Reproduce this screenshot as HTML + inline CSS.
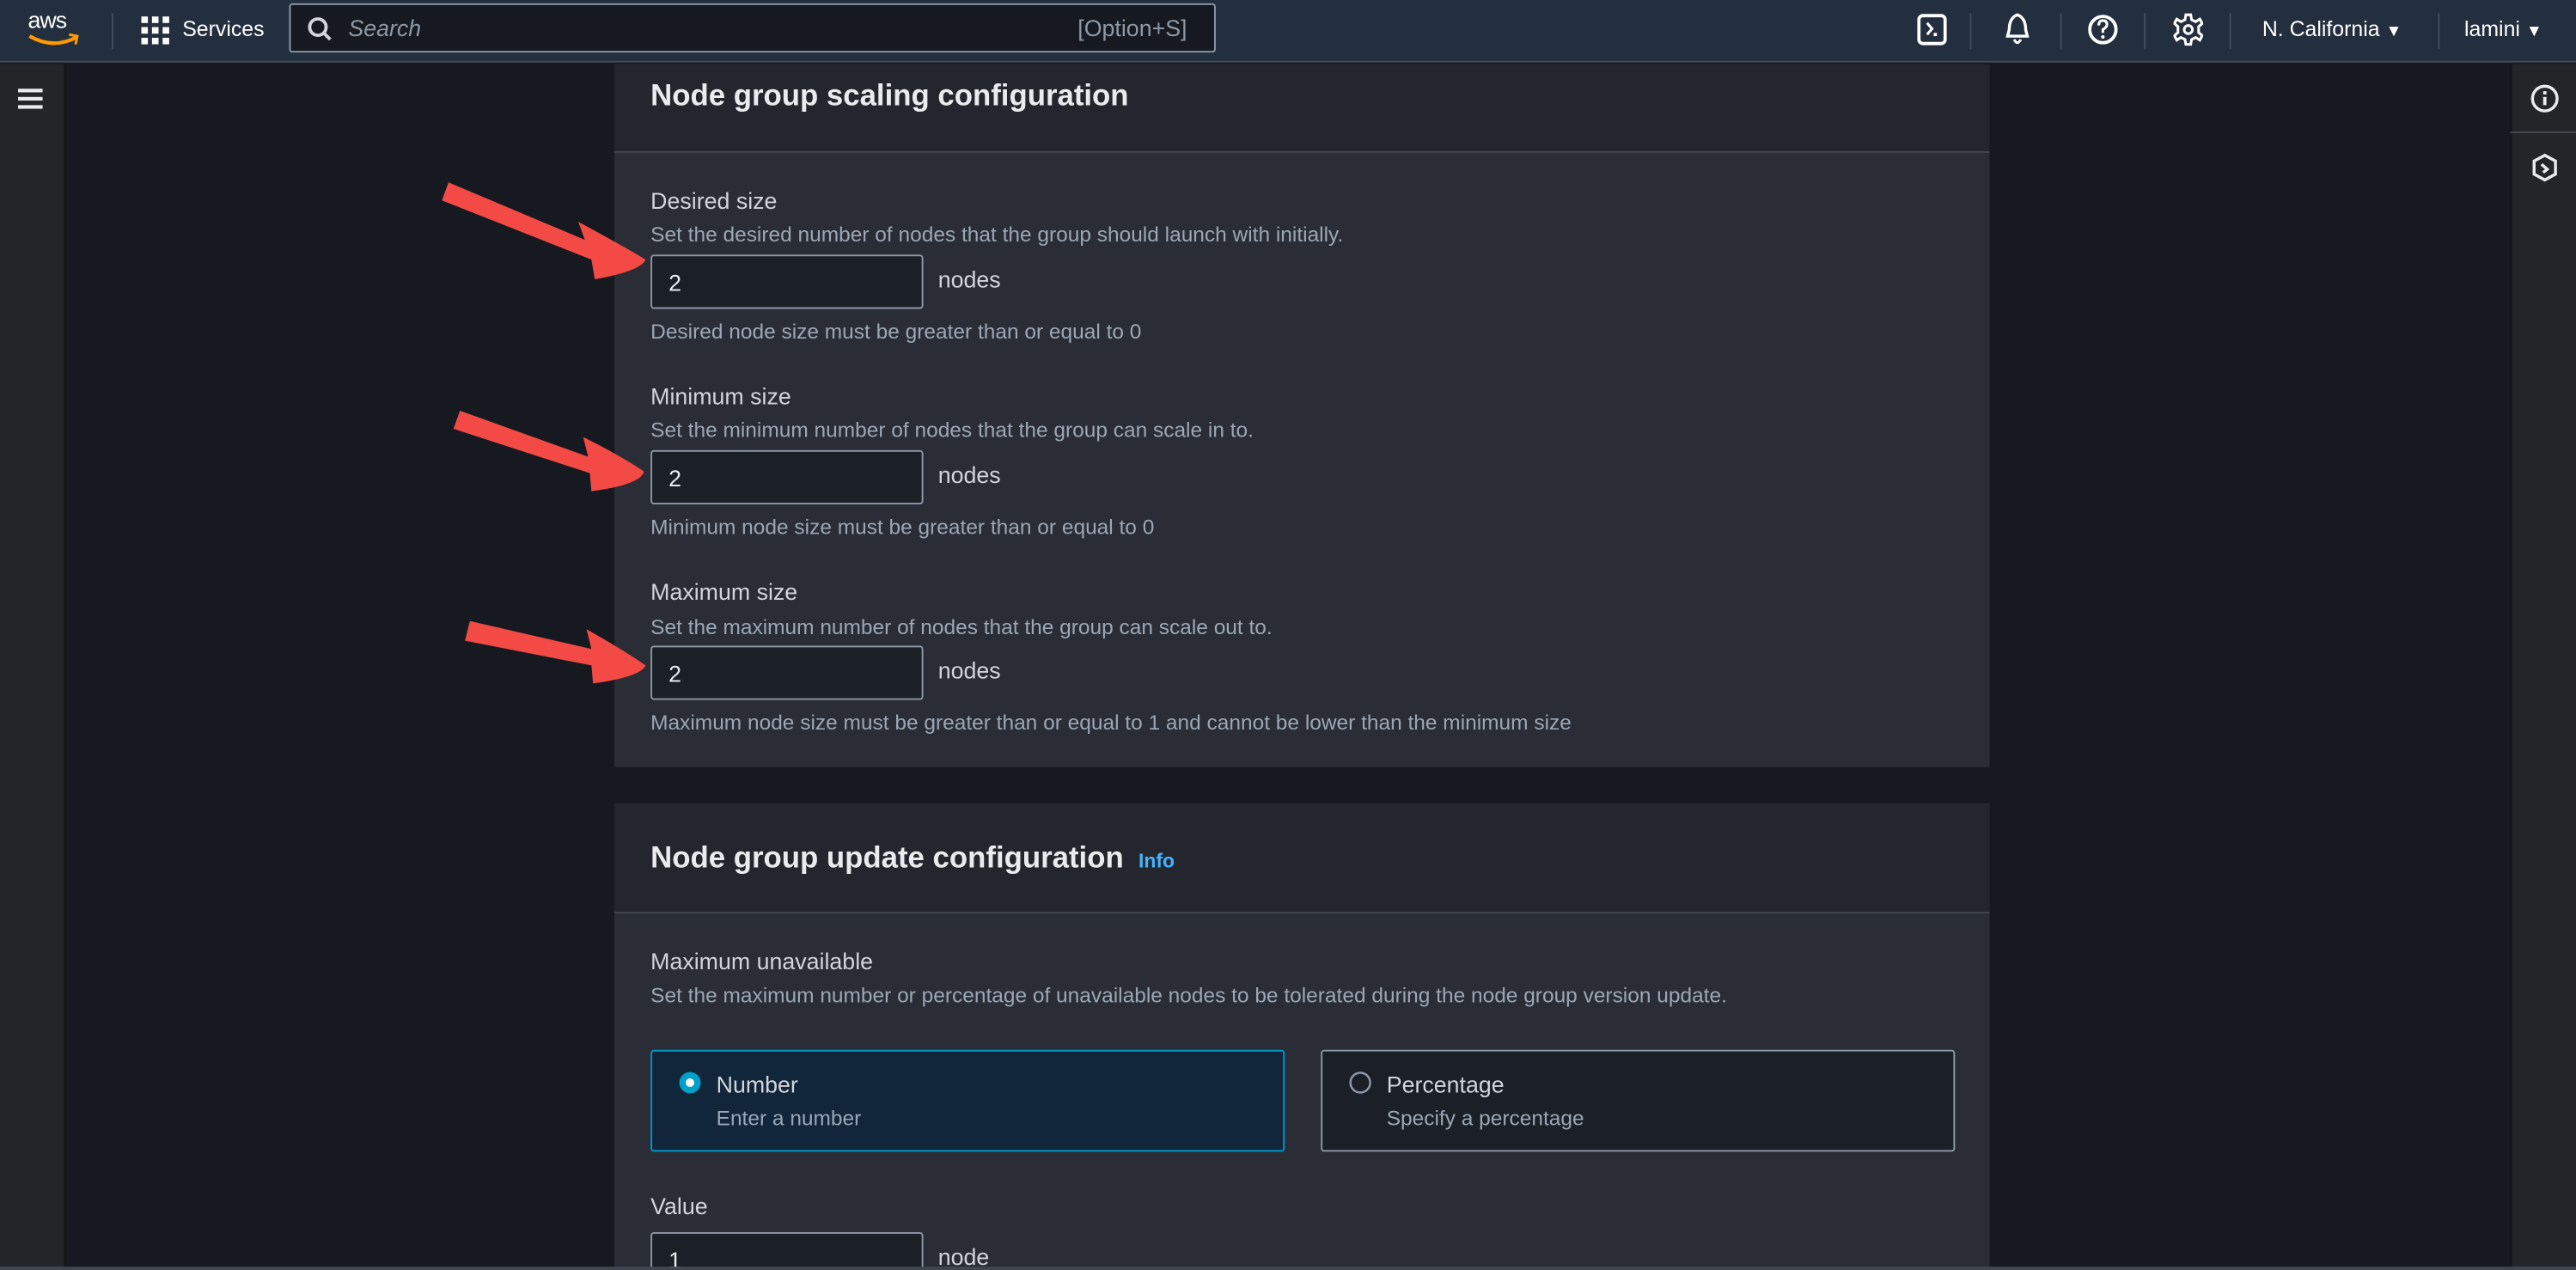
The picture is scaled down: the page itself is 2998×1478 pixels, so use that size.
<!DOCTYPE html>
<html><head><meta charset="utf-8"><style>
*{box-sizing:border-box;margin:0;padding:0}
html,body{width:2998px;height:1478px;overflow:hidden;background:#16191f}
#w{position:absolute;left:0;top:0;width:1568px;height:773px;overflow:hidden;transform:scale(1.912);transform-origin:0 0;font-family:"Liberation Sans",sans-serif;color:#d1d5db;background:#16191f}
.a{position:absolute}
.hdr{left:0;top:0;width:1568px;height:38px;background:#232f3e;border-bottom:1px solid #414d5c}
.sep{position:absolute;top:8px;width:1px;height:22px;background:#414d5c}
.t{position:absolute;white-space:nowrap}
.lbl{font-size:14px;color:#d1d5db}
.desc{font-size:12.8px;color:#9ba7b6}
.inp{position:absolute;width:166px;height:33px;background:#1b1f26;border:1px solid #8d99a8;border-radius:2px;font-size:14px;color:#e9ebed;padding:8px 10px}
.h2{font-size:18.2px;font-weight:bold;color:#e9ebed}
</style></head><body><div id="w">
<div class="a hdr">
 <div class="t" style="left:17px;top:4px;font-size:14px;color:#fff;letter-spacing:-0.5px">aws</div>
 <svg class="a" style="left:16px;top:20px" width="34" height="10"><path d="M2 2 Q16 10 30 3" stroke="#f90" stroke-width="2.2" fill="none"/><path d="M26 1 L31 2 L30 7" stroke="#f90" stroke-width="1.6" fill="none"/></svg>
 <div class="sep" style="left:68px"></div>
 <svg class="a" style="left:86px;top:10px" width="17" height="17" fill="#fff"><rect x="0" y="0" width="4" height="4"/><rect x="6.5" y="0" width="4" height="4"/><rect x="13" y="0" width="4" height="4"/><rect x="0" y="6.5" width="4" height="4"/><rect x="6.5" y="6.5" width="4" height="4"/><rect x="13" y="6.5" width="4" height="4"/><rect x="0" y="13" width="4" height="4"/><rect x="6.5" y="13" width="4" height="4"/><rect x="13" y="13" width="4" height="4"/></svg>
 <div class="t" style="left:111px;top:10px;font-size:13px;color:#fff">Services</div>
 <div class="a" style="left:176px;top:2px;width:564px;height:30px;background:#16191f;border:1px solid #8d99a8;border-radius:2px"></div>
 <svg class="a" style="left:187px;top:10px" width="16" height="16"><circle cx="6.5" cy="6.5" r="5" stroke="#d1d5db" stroke-width="2" fill="none"/><path d="M10 10 L14 14" stroke="#d1d5db" stroke-width="2"/></svg>
 <div class="t" style="left:212px;top:9px;font-size:14px;font-style:italic;color:#8d99a8">Search</div>
 <div class="t" style="left:656px;top:9px;font-size:14px;color:#8d99a8">[Option+S]</div>
 <svg class="a" style="left:1167px;top:8px" width="18" height="20"><rect x="1" y="1.5" width="16" height="17" rx="2.5" stroke="#fff" stroke-width="2" fill="none"/><path d="M6 6 L9 9.5 L6 13" stroke="#fff" stroke-width="1.6" fill="none"/><rect x="10" y="12" width="2" height="2" fill="#fff"/></svg>
 <div class="sep" style="left:1199px"></div>
 <svg class="a" style="left:1219px;top:7px" width="18" height="22"><path d="M9 2 Q4 4 4 11 L3 15 L15 15 L14 11 Q14 4 9 2 Z" stroke="#fff" stroke-width="1.8" fill="none"/><path d="M7 17 Q9 21 11 17" stroke="#fff" stroke-width="1.6" fill="none"/></svg>
 <div class="sep" style="left:1254px"></div>
 <svg class="a" style="left:1271px;top:8px" width="18" height="20"><circle cx="9" cy="10" r="8" stroke="#fff" stroke-width="2" fill="none"/><path d="M6.5 7.5 Q6.5 4.5 9 4.5 Q11.5 4.5 11.5 7 Q11.5 8.5 9 10 L9 12" stroke="#fff" stroke-width="1.6" fill="none"/><circle cx="9" cy="14.5" r="1.1" fill="#fff"/></svg>
 <div class="sep" style="left:1305px"></div>
 <svg class="a" style="left:1323px;top:8px" width="18" height="20" viewBox="0 0 18 20"><path d="M7.5 1 L10.5 1 L11 4 L13.5 5.2 L16 3.6 L17.5 6.3 L15.3 8.2 L15.3 11.8 L17.5 13.7 L16 16.4 L13.5 14.8 L11 16 L10.5 19 L7.5 19 L7 16 L4.5 14.8 L2 16.4 L0.5 13.7 L2.7 11.8 L2.7 8.2 L0.5 6.3 L2 3.6 L4.5 5.2 L7 4 Z" stroke="#fff" stroke-width="1.6" fill="none"/><circle cx="9" cy="10" r="2.5" stroke="#fff" stroke-width="1.6" fill="none"/></svg>
 <div class="sep" style="left:1357px"></div>
 <div class="t" style="left:1377px;top:10px;font-size:13px;color:#fff">N. California <span style="font-size:10px">▼</span></div>
 <div class="sep" style="left:1484px"></div>
 <div class="t" style="left:1500px;top:10px;font-size:13px;color:#fff">lamini <span style="font-size:10px">▼</span></div>
</div>
<div class="a" style="left:0;top:39px;width:40px;height:734px;background:#232629;border-right:1px solid #121418"></div>
<svg class="a" style="left:11px;top:53px" width="15" height="14" fill="#e9ebed"><rect y="1" width="15" height="2.2"/><rect y="6" width="15" height="2.2"/><rect y="11" width="15" height="2.2"/></svg>
<div class="a" style="left:1528px;top:39px;width:40px;height:734px;background:#232629;border-left:1px solid #121418"></div>
<div class="a" style="left:1528px;top:80px;width:40px;height:1px;background:#414750"></div>
<svg class="a" style="left:1540px;top:51px" width="18" height="18"><circle cx="9" cy="9" r="7.5" stroke="#e9ebed" stroke-width="1.8" fill="none"/><rect x="8" y="8" width="2" height="5" fill="#e9ebed"/><rect x="8" y="4.5" width="2" height="2" fill="#e9ebed"/></svg>
<svg class="a" style="left:1540px;top:93px" width="18" height="18"><path d="M9 1.5 L15.5 5 L15.5 13 L9 16.5 L2.5 13 L2.5 5 Z" stroke="#e9ebed" stroke-width="1.8" fill="none"/><path d="M7 7 L10.5 10 L8 12" stroke="#e9ebed" stroke-width="1.8" fill="none"/></svg>

<div class="a" style="left:374px;top:39px;width:837px;height:428px;background:#2a2d35"></div>
<div class="a" style="left:374px;top:39px;width:837px;height:54px;background:#23262d;border-bottom:1px solid #414750"></div>
<div class="t h2" style="left:396px;top:48px">Node group scaling configuration</div>

<div class="t lbl" style="left:396px;top:114px">Desired size</div>
<div class="t desc" style="left:396px;top:135px">Set the desired number of nodes that the group should launch with initially.</div>
<div class="inp" style="left:396px;top:155px">2</div>
<div class="t lbl" style="left:571px;top:162px">nodes</div>
<div class="t desc" style="left:396px;top:194px">Desired node size must be greater than or equal to 0</div>

<div class="t lbl" style="left:396px;top:233px">Minimum size</div>
<div class="t desc" style="left:396px;top:254px">Set the minimum number of nodes that the group can scale in to.</div>
<div class="inp" style="left:396px;top:274px">2</div>
<div class="t lbl" style="left:571px;top:281px">nodes</div>
<div class="t desc" style="left:396px;top:313px">Minimum node size must be greater than or equal to 0</div>

<div class="t lbl" style="left:396px;top:352px">Maximum size</div>
<div class="t desc" style="left:396px;top:374px">Set the maximum number of nodes that the group can scale out to.</div>
<div class="inp" style="left:396px;top:393px">2</div>
<div class="t lbl" style="left:571px;top:400px">nodes</div>
<div class="t desc" style="left:396px;top:432px">Maximum node size must be greater than or equal to 1 and cannot be lower than the minimum size</div>

<div class="a" style="left:374px;top:489px;width:837px;height:284px;background:#2a2d35"></div>
<div class="a" style="left:374px;top:489px;width:837px;height:67px;background:#23262d;border-bottom:1px solid #414750"></div>
<div class="t h2" style="left:396px;top:512px">Node group update configuration <span style="font-size:12px;color:#42b4ff;margin-left:4px">Info</span></div>
<div class="t lbl" style="left:396px;top:577px">Maximum unavailable</div>
<div class="t desc" style="left:396px;top:598px">Set the maximum number or percentage of unavailable nodes to be tolerated during the node group version update.</div>

<div class="a" style="left:396px;top:639px;width:386px;height:62px;background:#12263b;border:1px solid #0099cc;border-radius:2px"></div>
<svg class="a" style="left:413px;top:652px" width="14" height="14"><circle cx="7" cy="7" r="6.5" fill="#00a1c9"/><circle cx="7" cy="7" r="2.6" fill="#fff"/></svg>
<div class="t lbl" style="left:436px;top:652px">Number</div>
<div class="t desc" style="left:436px;top:673px">Enter a number</div>
<div class="a" style="left:804px;top:639px;width:386px;height:62px;background:#1b1f26;border:1px solid #8d99a8;border-radius:2px"></div>
<svg class="a" style="left:821px;top:652px" width="14" height="14"><circle cx="7" cy="7" r="6" stroke="#8d99a8" stroke-width="1.3" fill="none"/></svg>
<div class="t lbl" style="left:844px;top:652px">Percentage</div>
<div class="t desc" style="left:844px;top:673px">Specify a percentage</div>

<div class="t lbl" style="left:396px;top:726px">Value</div>
<div class="inp" style="left:396px;top:750px;height:40px">1</div>
<div class="t lbl" style="left:571px;top:757px">node</div>
<div class="a" style="left:0;top:771px;width:1568px;height:2px;background:#414750"></div>

<svg class="a" style="left:0;top:0" width="1568" height="773">
<g fill="#f44a45">
<path d="M273 111 L356 146 L352 135 Q378 149 393 158 Q390 165 362 170 L360 158 L269 122 Z"/>
<path d="M280 250 L358 278 L355 266 Q379 278 392 287 Q390 295 360 299 L359 288 L276 261 Z"/>
<path d="M286 378 L360 395 L357 383 Q380 396 393 405 Q390 412 361 416 L360 405 L283 390 Z"/>
</g></svg>
</div></body></html>
